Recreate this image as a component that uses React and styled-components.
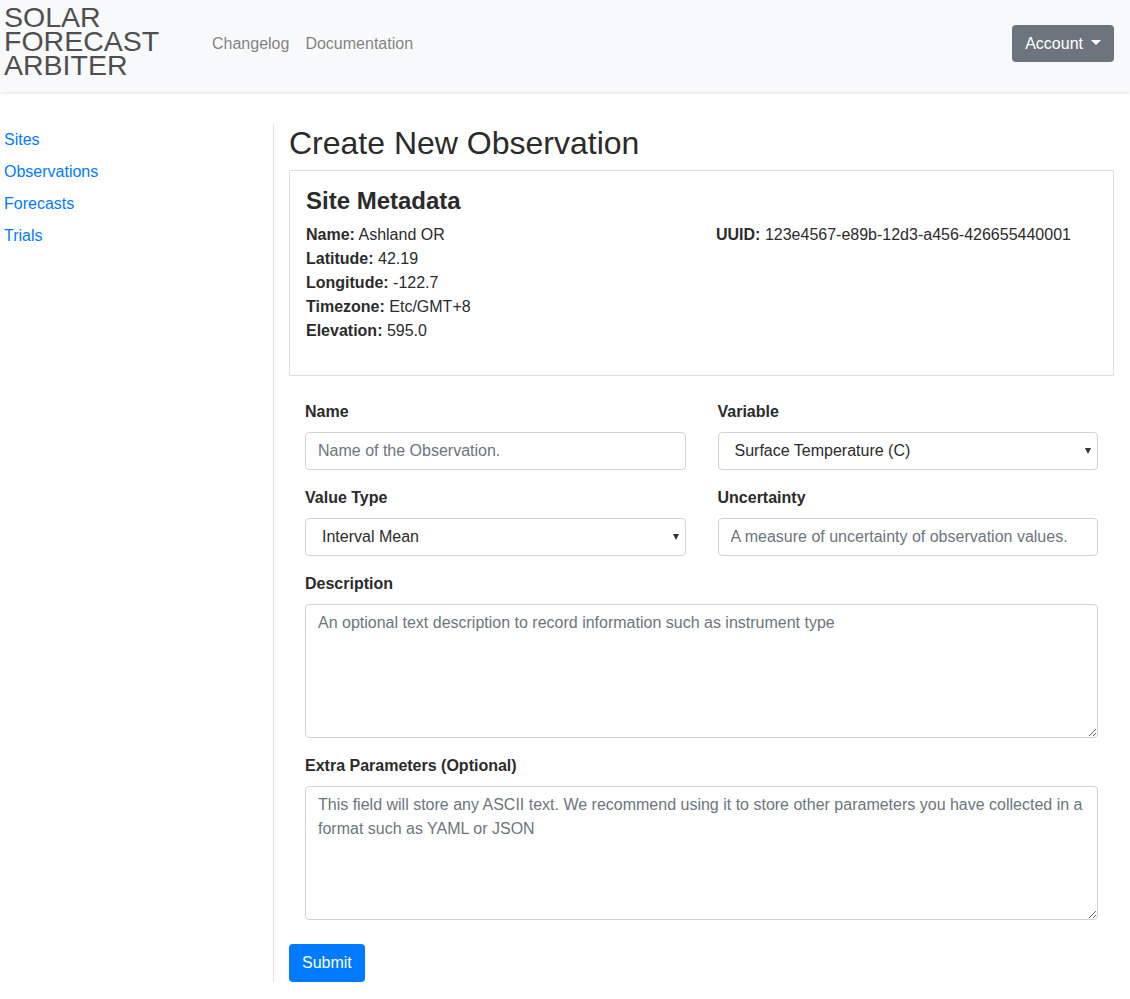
import React from 'react'
import styled, { createGlobalStyle } from 'styled-components'

const Global = createGlobalStyle`
body {
  margin: 0;
  font-family: "Liberation Sans", Arial, sans-serif;
  font-size: 16px;
  line-height: 1.5;
  color: #2b2b2b;
  background: #fff;
}
* { box-sizing: border-box; }
`;

const Header = styled.header`
height: 92px;
background-color: #f8f9fa;
box-shadow: 0 1px 3px rgba(0,0,0,.12);
display: flex;
align-items: center;
padding: 0 16px 6px 4px;
`;

const Logo = styled.a`
font-size: 28.5px;
line-height: 24px;
color: #4f4f4f;
text-decoration: none;
width: 200px;
margin-top: -5px;
`;

const NavLink = styled.a`
color: rgba(0,0,0,.5);
text-decoration: none;
padding: 0 8px;
margin-top: 2px;
`;

const AccountButton = styled.button`
margin-left: auto;
height: 37px;
padding: 0 13px;
border: none;
border-radius: 4px;
background-color: #6c757d;
color: #fff;
font-family: inherit;
font-size: 16px;
display: flex;
align-items: center;
gap: 8px;
margin-top: 1px;

&::after {
  content: "";
  border-top: 5px solid #fff;
  border-left: 5px solid transparent;
  border-right: 5px solid transparent;
  margin-top: -2px;
}
`;

const Body = styled.div`
display: flex;
padding-top: 32px;
`;

const Sidebar = styled.nav`
width: 273px;
display: flex;
flex-direction: column;
align-items: flex-start;
`;

const SideLink = styled.a`
color: #007bff;
text-decoration: none;
padding: 4px 4px;
`;

const Main = styled.main`
flex: 1;
border-left: 1px solid #dee2e6;
padding: 0 16px 0 15px;
`;

const Title = styled.h2`
font-size: 32px;
font-weight: 400;
line-height: 1.2;
margin: 0 0 8px;
`;

const Card = styled.section`
border: 1px solid #dfdfdf;
padding: 16px 16px 16px;
`;

const CardTitle = styled.h3`
font-size: 24px;
font-weight: 700;
line-height: 1.2;
margin: 0 0 7px;
`;

const MetaGrid = styled.div`
display: grid;
grid-template-columns: 410px 1fr;
margin-bottom: 16px;
`;

const MetaLine = styled.div`
line-height: 24px;
`;

const Form = styled.form`
margin-top: 24px;
`;

const Fields = styled.div`
display: grid;
grid-template-columns: 1fr 1fr;
column-gap: 32px;
padding: 0 16px;
`;

const Group = styled.div`
margin-bottom: 16px;
grid-column: ${p => (p.$wide ? '1 / -1' : 'auto')};
`;

const Label = styled.label`
display: block;
font-weight: 700;
margin-bottom: 8px;
`;

const fieldBase = `
display: block;
width: 100%;
border: 1px solid #ced4da;
border-radius: 4px;
font-family: inherit;
font-size: 16px;
line-height: 24px;
color: #495057;
background: #fff;
&::placeholder { color: #6c757d; opacity: 1; }
`;

const Input = styled.input`
${fieldBase}
height: 38px;
padding: 6px 12px;
`;

const TextArea = styled.textarea`
${fieldBase}
height: 134px;
padding: 6px 12px;
resize: vertical;
`;

const SelectWrap = styled.div`
position: relative;

&::after {
  content: "";
  position: absolute;
  right: 7px;
  top: 16px;
  border-top: 6px solid #333;
  border-left: 3px solid transparent;
  border-right: 3px solid transparent;
  pointer-events: none;
}
`;

const Select = styled.select`
${fieldBase}
height: 38px;
padding: 6px 12px 6px 16px;
appearance: none;
color: #2b2b2b;
`;

const SubmitButton = styled.button`
margin-top: 8px;
height: 38px;
padding: 0 13px;
border: none;
border-radius: 4px;
background-color: #007bff;
color: #fff;
font-family: inherit;
font-size: 16px;
`;

const meta = [
  ['Name', 'Ashland OR'],
  ['Latitude', '42.19'],
  ['Longitude', '-122.7'],
  ['Timezone', 'Etc/GMT+8'],
  ['Elevation', '595.0'],
];

export default function App() {
  return (
    <>
      <Global />
      <Header>
        <Logo href="#">SOLAR<br />FORECAST<br />ARBITER</Logo>
        <NavLink href="#">Changelog</NavLink>
        <NavLink href="#">Documentation</NavLink>
        <AccountButton>Account</AccountButton>
      </Header>
      <Body>
        <Sidebar>
          <SideLink href="#">Sites</SideLink>
          <SideLink href="#">Observations</SideLink>
          <SideLink href="#">Forecasts</SideLink>
          <SideLink href="#">Trials</SideLink>
        </Sidebar>
        <Main>
          <Title>Create New Observation</Title>
          <Card>
            <CardTitle>Site Metadata</CardTitle>
            <MetaGrid>
              <div>
                {meta.map(([k, v]) => (
                  <MetaLine key={k}><b>{k}:</b> {v}</MetaLine>
                ))}
              </div>
              <div>
                <MetaLine><b>UUID:</b> 123e4567-e89b-12d3-a456-426655440001</MetaLine>
              </div>
            </MetaGrid>
          </Card>
          <Form onSubmit={e => e.preventDefault()}>
            <Fields>
              <Group>
                <Label>Name</Label>
                <Input placeholder="Name of the Observation." />
              </Group>
              <Group>
                <Label>Variable</Label>
                <SelectWrap>
                  <Select defaultValue="temp">
                    <option value="temp">Surface Temperature (C)</option>
                  </Select>
                </SelectWrap>
              </Group>
              <Group>
                <Label>Value Type</Label>
                <SelectWrap>
                  <Select defaultValue="mean">
                    <option value="mean">Interval Mean</option>
                  </Select>
                </SelectWrap>
              </Group>
              <Group>
                <Label>Uncertainty</Label>
                <Input placeholder="A measure of uncertainty of observation values." />
              </Group>
              <Group $wide>
                <Label>Description</Label>
                <TextArea placeholder="An optional text description to record information such as instrument type" />
              </Group>
              <Group $wide>
                <Label>Extra Parameters (Optional)</Label>
                <TextArea placeholder="This field will store any ASCII text. We recommend using it to store other parameters you have collected in a format such as YAML or JSON" />
              </Group>
            </Fields>
            <SubmitButton type="submit">Submit</SubmitButton>
          </Form>
        </Main>
      </Body>
    </>
  )
}
